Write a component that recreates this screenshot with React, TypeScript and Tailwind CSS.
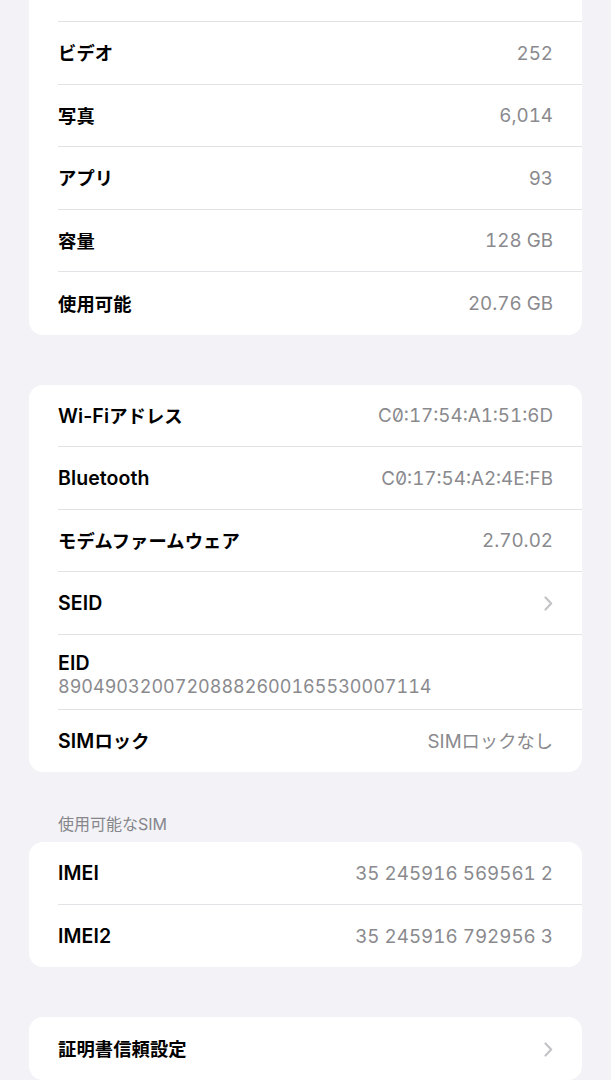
import React from 'react';

const CJK = /([\u3040-\u30ff\u3400-\u9fff\uff00-\uffef]+)/;

// Latin text in Inter, Japanese runs slightly smaller to match iOS metrics
function Mixed({ text }: { text: string }) {
  return (
    <>
      {text.split(CJK).map((part, i) =>
        CJK.test(part) ? (
          <span key={i} className="text-[18.3px]">
            {part}
          </span>
        ) : (
          <React.Fragment key={i}>{part}</React.Fragment>
        )
      )}
    </>
  );
}

function Chevron() {
  return (
    <svg width="9" height="15" viewBox="0 0 9 15" fill="none" className="shrink-0">
      <path d="M1.5 1.5 L7.2 7.5 L1.5 13.5" stroke="#c4c4c8" strokeWidth="2.2" strokeLinecap="round" strokeLinejoin="round" />
    </svg>
  );
}

type RowProps = {
  label: string;
  value?: string;
  chevron?: boolean;
  last?: boolean;
  mac?: boolean;
};

function Row({ label, value, chevron, last, mac }: RowProps) {
  return (
    <div className="pl-[29px]">
      <div
        className={
          last
            ? 'flex h-[62.5px] items-center justify-between pt-[2px] pr-[29px]'
            : 'flex h-[62.5px] items-center justify-between pt-[2px] pr-[29px] border-b border-[#e2e2e6]'
        }
      >
        <span className="font-semibold text-[19.5px] text-black tracking-[0.005em]">
          <Mixed text={label} />
        </span>
        {value && (
          <span
            className={
              mac
                ? "text-[18.8px] text-[#8a8a8e] [font-feature-settings:'tnum','zero']"
                : "text-[18.8px] text-[#8a8a8e] [font-feature-settings:'tnum']"
            }
          >
            <Mixed text={value} />
          </span>
        )}
        {chevron && <Chevron />}
      </div>
    </div>
  );
}

function Card({ children, className = '' }: { children: React.ReactNode; className?: string }) {
  return <div className={'mx-[29px] overflow-hidden rounded-[14px] bg-white ' + className}>{children}</div>;
}

export default function App() {
  return (
    <div
      className="min-h-screen overflow-hidden bg-[#f2f2f7] pb-10"
      style={{ fontFamily: 'Inter, "Noto Sans CJK JP", sans-serif' }}
    >
      <Card className="-mt-[40.5px]">
        <Row label="曲" />
        <Row label="ビデオ" value="252" />
        <Row label="写真" value="6,014" />
        <Row label="アプリ" value="93" />
        <Row label="容量" value="128 GB" />
        <Row label="使用可能" value="20.76 GB" last />
      </Card>

      <Card className="mt-[50px]">
        <Row label="Wi-Fiアドレス" value="C0:17:54:A1:51:6D" mac />
        <Row label="Bluetooth" value="C0:17:54:A2:4E:FB" mac />
        <Row label="モデムファームウェア" value="2.70.02" />
        <Row label="SEID" chevron />
        <div className="pl-[29px]">
          <div className="flex flex-col border-b border-[#e2e2e6] pt-[16px] pb-[10px] pr-[29px]">
            <span className="font-semibold text-[19.5px] leading-[24px] text-black tracking-[0.005em]">EID</span>
            <span className="text-[18px] leading-[24px] text-[#8a8a8e] [font-feature-settings:'tnum']">
              89049032007208882600165530007114
            </span>
          </div>
        </div>
        <Row label="SIMロック" value="SIMロックなし" last />
      </Card>

      <div className="px-[58px] pt-[42px] pb-[8px]">
        <div className="text-[16px] leading-[20px] text-[#86868b]">
          使用可能なSIM
        </div>
      </div>

      <Card>
        <Row label="IMEI" value="35 245916 569561 2" />
        <Row label="IMEI2" value="35 245916 792956 3" last />
      </Card>

      <Card className="mt-[50px]">
        <Row label="証明書信頼設定" chevron last />
      </Card>
    </div>
  );
}
